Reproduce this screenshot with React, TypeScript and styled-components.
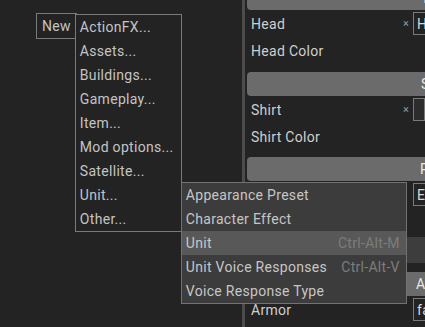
import * as React from "react";
import styled, { createGlobalStyle } from "styled-components";

const GlobalStyle = createGlobalStyle`
  html, body {
    margin: 0;
    padding: 0;
    background: #232323;
    overflow: hidden;
  }
  body {
    font-family: Roboto, "Liberation Sans", sans-serif;
    font-size: 14px;
    color: #c4c4c4;
  }
`;

const Screen = styled.div`
  display: flex;
  width: 425px;
  height: 327px;
  overflow: hidden;
  background: #232323;
`;

const LeftPanel = styled.div`
  width: 242px;
  flex-shrink: 0;
  padding: 13px 0 0 36px;
  box-sizing: border-box;
`;

const Divider = styled.div`
  width: 3px;
  flex-shrink: 0;
  background: #4c4c4c;
`;

const RightPanel = styled.div`
  flex: 1;
  min-width: 0;
  margin-top: -14px;
  padding-left: 2px;
  display: flex;
  flex-direction: column;
`;

const MenuBar = styled.div`
  display: flex;
`;

const MenuButton = styled.div`
  position: relative;
  box-sizing: border-box;
  height: 26px;
  padding: 0 5px;
  border: 1px solid #7a7a7a;
  display: flex;
  align-items: center;
  letter-spacing: 0.3px;
`;

const Menu = styled.div`
  position: absolute;
  left: calc(100% - 1px);
  top: 0;
  width: 107px;
  box-sizing: border-box;
  background: #232323;
  border: 1px solid #7a7a7a;
  z-index: 2;
`;

const MenuItem = styled.div`
  position: relative;
  height: 24px;
  padding-left: 4px;
  display: flex;
  align-items: center;
  white-space: nowrap;
  letter-spacing: 0.3px;
`;

const SubMenu = styled.div`
  position: absolute;
  left: 105px;
  top: -1px;
  width: 226px;
  box-sizing: border-box;
  background: #3c3c3c;
  border: 1px solid #727272;
  z-index: 3;
`;

const SubItem = styled.div<{ $active?: boolean }>`
  height: 24px;
  padding: 0 6px 0 4px;
  display: flex;
  align-items: center;
  justify-content: space-between;
  white-space: nowrap;
  letter-spacing: 0.3px;
  background: ${(p) => (p.$active ? "#585858" : "transparent")};
  color: #c6c6c6;
`;

const Shortcut = styled.span`
  color: #7c7c7c;
`;

const Header = styled.div<{ $indent: number }>`
  flex-shrink: 0;
  height: 24px;
  border-radius: 4px 0 0 4px;
  background: #6b6b6b;
  color: #e8e8e8;
  display: flex;
  align-items: center;
  padding-left: ${(p) => p.$indent}px;
  white-space: nowrap;
  letter-spacing: 0.3px;
`;

const Gap = styled.div<{ $h: number }>`
  flex-shrink: 0;
  height: ${(p) => p.$h}px;
`;

const Row = styled.div`
  flex-shrink: 0;
  height: 27px;
  display: flex;
  align-items: center;
  padding-left: 4px;
  white-space: nowrap;
  letter-spacing: 0.3px;
`;

const Label = styled.span`
  width: 152px;
  flex-shrink: 0;
  color: #cfcfcf;
`;

const Clear = styled.span`
  width: 10px;
  flex-shrink: 0;
  font-size: 11px;
  color: #9a9a9a;
`;

const Input = styled.div<{ $filled?: boolean }>`
  box-sizing: border-box;
  height: 23px;
  width: 120px;
  border: 1px solid #7a7a7a;
  background: ${(p) => (p.$filled ? "#2c2c2c" : "#232323")};
  padding-left: 3px;
  display: flex;
  align-items: center;
  color: #d8d8d8;
`;

const InputSpacer = styled.span`
  width: 10px;
  flex-shrink: 0;
`;

const Button = styled.div`
  flex-shrink: 0;
  height: 26px;
  margin-left: 160px;
  background: #3d3d3d;
`;

const newItems = [
  "ActionFX...",
  "Assets...",
  "Buildings...",
  "Gameplay...",
  "Item...",
  "Mod options...",
  "Satellite...",
  "Unit...",
  "Other...",
];

const unitItems: { label: string; shortcut?: string; active?: boolean }[] = [
  { label: "Appearance Preset" },
  { label: "Character Effect" },
  { label: "Unit", shortcut: "Ctrl-Alt-M", active: true },
  { label: "Unit Voice Responses", shortcut: "Ctrl-Alt-V" },
  { label: "Voice Response Type" },
];

const App = () => {
  return (
    <Screen>
      <GlobalStyle />
      <LeftPanel>
        <MenuBar>
          <MenuButton>
            New
            <Menu>
              {newItems.map((item) => (
                <MenuItem key={item}>
                  {item}
                  {item === "Unit..." && (
                    <SubMenu>
                      {unitItems.map((s) => (
                        <SubItem key={s.label} $active={s.active}>
                          <span>{s.label}</span>
                          {s.shortcut && <Shortcut>{s.shortcut}</Shortcut>}
                        </SubItem>
                      ))}
                    </SubMenu>
                  )}
                </MenuItem>
              ))}
            </Menu>
          </MenuButton>
        </MenuBar>
      </LeftPanel>
      <Divider />
      <RightPanel>
        <Header $indent={174}>Torso</Header>
        <Row>
          <Label>Head</Label>
          <Clear>×</Clear>
          <Input>Head</Input>
        </Row>
        <Row>
          <Label>Head Color</Label>
        </Row>
        <Gap $h={8} />
        <Header $indent={174}>Shirt</Header>
        <Row>
          <Label>Shirt</Label>
          <Clear>×</Clear>
          <Input $filled></Input>
        </Row>
        <Row>
          <Label>Shirt Color</Label>
        </Row>
        <Gap $h={7} />
        <Header $indent={173}>Pants</Header>
        <Row>
          <Label />
          <InputSpacer />
          <Input>Empty</Input>
        </Row>
        <Gap $h={29} />
        <Button />
        <Gap $h={9} />
        <Header $indent={169}>Armor</Header>
        <Row>
          <Label>Armor</Label>
          <InputSpacer />
          <Input>false</Input>
        </Row>
      </RightPanel>
    </Screen>
  );
};

export default App;
